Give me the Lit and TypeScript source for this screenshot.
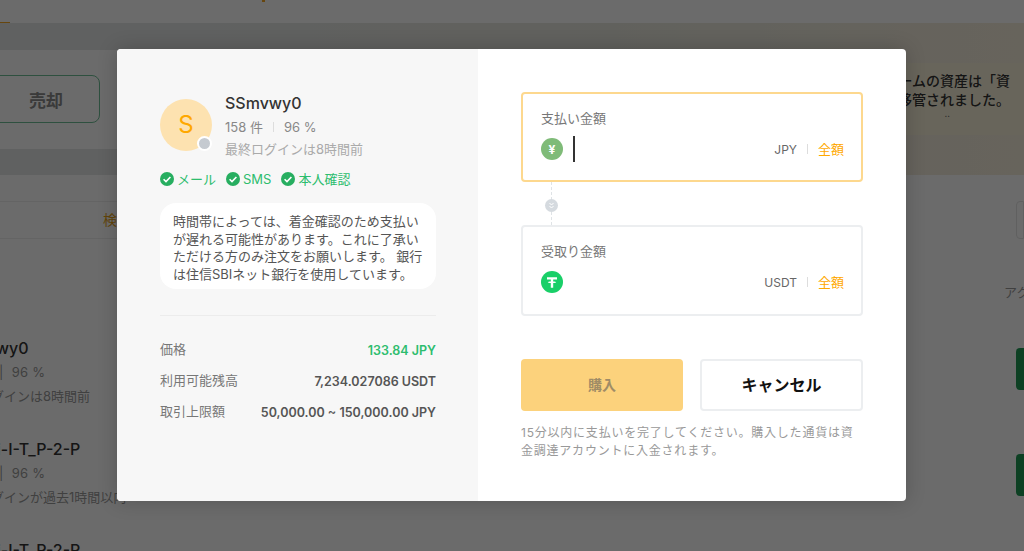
import { LitElement, html, css } from 'lit';
import { customElement } from 'lit/decorators.js';

const checkIcon = html`<svg class="check" viewBox="0 0 14 14" width="14" height="14">
  <circle cx="7" cy="7" r="7" fill="#27ae60"></circle>
  <path d="M3.6 7.2l2.4 2.4 4.4-4.6" fill="none" stroke="#fff" stroke-width="1.6"></path>
</svg>`;

const tetherIcon = html`<svg viewBox="0 0 22 22" width="22" height="22">
  <circle cx="11" cy="11" r="11" fill="#19cf68"></circle>
  <path d="M6 6.2h10v2.2h-3.8v2.1c1.6.1 3 .4 3 .8s-1.4.7-3 .8v4.6H9.8v-4.6c-1.6-.1-3-.4-3-.8s1.4-.7 3-.8V8.400H6z" fill="#fff"></path>
</svg>`;

const traders = [
  { name: 'SSmvwy0', login: '最終ログインは8時間前' },
  { name: 'HODLi-I-T_P-2-P', login: '最終ログインが過去1時間以内' },
  { name: 'HODLi-I-T_P-2-P', login: '最終ログインが過去1時間以内' },
];

@customElement('app-root')
export default class App extends LitElement {
  static override styles = css`
    :host {
      display: block;
      font-family: Inter, 'Noto Sans CJK JP', sans-serif;
      color: #333;
    }
    .page {
      position: relative;
      height: 551px;
      overflow: hidden;
      background: #fff;
    }

    /* page behind the dialog */
    .bg__top {
      height: 23px;
      display: flex;
      align-items: flex-end;
    }
    .bg__top > i {
      width: 10px;
      height: 1px;
      background: #f5a623;
    }
    .bg__top > b {
      align-self: flex-start;
      width: 3px;
      height: 2px;
      margin-left: 252px;
      background: #f5a623;
    }
    .bg__hero {
      display: grid;
      grid-template-columns: 1fr 480px;
      height: 152px;
      background: linear-gradient(90deg, #e4e6e6 20%, #e8e8de 60%, #f6eedc 100%);
    }
    .bg__hero-left {
      padding: 27px 0 26px;
    }
    .bg__panel {
      height: 99px;
      background: #fff;
      padding-top: 25px;
      box-sizing: border-box;
    }
    .bg__sell {
      width: 120px;
      height: 48px;
      margin-left: -20px;
      display: flex;
      align-items: center;
      justify-content: center;
      padding-left: 12px;
      border: 1px solid #6fbf97;
      border-radius: 8px;
      box-sizing: border-box;
      font-size: 17px;
      font-weight: 700;
      color: #8a8a8a;
    }
    .bg__hero-right {
      padding: 40px 0;
    }
    .bg__notice {
      height: 72px;
      box-sizing: border-box;
      padding: 8px 14px 0 0;
      background: #f8f1da;
      text-align: right;
      font-size: 14px;
      font-weight: 500;
      line-height: 19px;
      white-space: nowrap;
    }
    .bg__dots {
      font-size: 9px;
      line-height: 10px;
      padding-right: 60px;
      color: #555;
    }
    .bg__lower {
      display: grid;
      grid-template-columns: 1fr 120px;
    }
    .bg__tabs {
      margin-top: 26px;
      height: 38px;
      border: solid #eee;
      border-width: 1px 0;
      box-sizing: border-box;
      padding-left: 103px;
      font-size: 14px;
      line-height: 36px;
      color: #e8a317;
    }
    .bg__traders {
      display: flex;
      flex-direction: column;
      gap: 30px;
      margin: 98px 0 0 -48px;
    }
    .bg__trader-name {
      font-size: 16px;
      font-weight: 500;
      line-height: 22px;
      height: 22px;
    }
    .bg__trader-stats,
    .bg__trader-login {
      font-size: 13px;
      color: #999;
      line-height: 24px;
      white-space: nowrap;
    }
    .bg__trader-stats {
      margin-top: 1px;
      word-spacing: 0.6px;
    }
    .bg__side {
      padding-top: 26px;
    }
    .bg__filter {
      height: 38px;
      margin-left: 112px;
      border: 1px solid #e4e4e4;
      border-radius: 4px 0 0 4px;
      box-sizing: border-box;
    }
    .bg__side-label {
      margin: 44px 0 0 100px;
      font-size: 13px;
      line-height: 18px;
      color: #999;
      white-space: nowrap;
    }
    .bg__buy {
      height: 42px;
      margin: 47px 0 64px 112px;
      background: #1f9a55;
      border-radius: 4px 0 0 4px;
    }
    .bg__buy + .bg__buy {
      margin-top: 0;
    }

    /* dialog */
    .overlay {
      position: absolute;
      inset: 0;
      display: flex;
      align-items: center;
      justify-content: center;
      padding: 0 1px 1px 0;
      background: rgba(0, 0, 0, 0.58);
    }
    .modal {
      display: flex;
      width: 789px;
      height: 452px;
      background: #fff;
      border-radius: 4px;
      overflow: hidden;
      box-shadow: 0 0 20px rgba(0, 0, 0, 0.2);
    }
    .info {
      width: 361px;
      box-sizing: border-box;
      padding: 50px 42px 0 43px;
      background: #f7f7f7;
    }
    .user {
      display: flex;
      gap: 13px;
    }
    .avatar {
      position: relative;
      flex: none;
      width: 52px;
      height: 52px;
      border-radius: 50%;
      background: #fde2b0;
      color: #ffa800;
      font-size: 24px;
      line-height: 52px;
      text-align: center;
    }
    .avatar::after {
      content: '';
      position: absolute;
      right: 0;
      bottom: 0;
      width: 11px;
      height: 11px;
      border: 2px solid #fff;
      border-radius: 50%;
      background: #c5cad0;
    }
    .user__name {
      margin-top: -7px;
      font-size: 16px;
      font-weight: 500;
      line-height: 22px;
      color: #333;
    }
    .user__stats {
      display: flex;
      align-items: center;
      margin-top: 1px;
      font-size: 13px;
      line-height: 24px;
      color: #888;
    }
    .user__stats > i {
      width: 1px;
      height: 10px;
      margin: 0 10px;
      background: #ddd;
    }
    .user__login {
      font-size: 13px;
      line-height: 20px;
      color: #aaa;
    }
    .verified {
      display: flex;
      gap: 10px;
      margin-top: 10px;
      font-size: 13px;
      line-height: 20px;
      color: #2dbd6e;
    }
    .verified > span {
      display: flex;
      align-items: center;
      gap: 3px;
    }
    .note {
      margin-top: 14px;
      padding: 10px 13px 0;
      height: 86px;
      box-sizing: border-box;
      background: #fff;
      border-radius: 16px;
      font-size: 13px;
      line-height: 17.6px;
      color: #555;
    }
    .info hr {
      height: 1px;
      margin: 26px 0 25px;
      border: 0;
      background: #ececec;
    }
    .rows {
      display: grid;
      grid-template-columns: auto 1fr;
      row-gap: 12px;
      font-size: 13px;
      line-height: 18px;
      color: #777;
    }
    .rows > span {
      margin-top: -1px;
    }
    .rows > b {
      margin-top: 1px;
      text-align: right;
      font-size: 12.5px;
      font-weight: 600;
      color: #555;
    }
    .rows > b.price {
      color: #2dbd6e;
    }
    .trade {
      flex: 1;
      padding: 43px;
    }
    .field {
      display: flex;
      flex-direction: column;
      gap: 9px;
      height: 91px;
      box-sizing: border-box;
      padding: 15px 18px 0;
      border: 2px solid #eceef0;
      border-radius: 4px;
    }
    .field--active {
      height: 90px;
      border-color: #fdd88e;
    }
    .field__label {
      font-size: 13px;
      line-height: 18px;
      color: #777;
    }
    .field__row {
      display: flex;
      align-items: center;
      height: 26px;
      margin-right: -1px;
    }
    .coin {
      display: flex;
      align-items: center;
      justify-content: center;
      width: 22px;
      height: 22px;
      border-radius: 50%;
      background: #7fbb78;
      color: #fff;
      font-size: 12px;
      font-weight: 700;
    }
    .caret {
      width: 2px;
      height: 26px;
      margin-left: 10px;
      background: #333;
    }
    .unit {
      margin-left: auto;
      font-size: 12px;
      color: #666;
    }
    .sep {
      width: 1px;
      height: 10px;
      margin: 0 10px;
      background: #ddd;
    }
    .all {
      margin-top: -1px;
      font-size: 13px;
      color: #ffa800;
    }
    .link {
      position: relative;
      height: 43px;
      width: 61px;
      box-sizing: border-box;
      padding-top: 4px;
      display: flex;
      align-items: center;
      justify-content: center;
    }
    .link::before {
      content: '';
      position: absolute;
      top: 0;
      bottom: 0;
      left: 30px;
      border-left: 1px dashed #dfe3e6;
    }
    .link > span {
      position: relative;
      display: flex;
      width: 13px;
      height: 13px;
      border-radius: 50%;
      background: #d5dadf;
    }
    .link svg {
      margin: auto;
    }
    .actions {
      display: grid;
      grid-template-columns: 162px 163px;
      justify-content: space-between;
      margin-top: 43px;
    }
    .btn {
      height: 52px;
      display: flex;
      align-items: center;
      justify-content: center;
      box-sizing: border-box;
      padding-bottom: 2px;
      border-radius: 4px;
      font-size: 14px;
      font-weight: 700;
    }
    .btn--buy {
      background: #fcd27c;
      color: #a08c66;
    }
    .btn--cancel {
      border: 2px solid #eceef0;
      font-size: 16px;
      color: #111;
    }
    .hint {
      margin: 13px 0 0;
      font-size: 12px;
      line-height: 18px;
      letter-spacing: 0.78px;
      color: #999;
    }
  `;

  renderField(label: string, unit: string, coin: unknown, active = false) {
    return html`
      <div class="field ${active ? 'field--active' : ''}">
        <div class="field__label">${label}</div>
        <div class="field__row">
          ${coin}
          ${active ? html`<div class="caret"></div>` : ''}
          <span class="unit">${unit}</span>
          <span class="sep"></span>
          <span class="all">全額</span>
        </div>
      </div>
    `;
  }

  override render() {
    return html`
      <div class="page">
        <div class="bg__top"><i></i><b></b></div>
        <div class="bg__hero">
          <div class="bg__hero-left">
            <div class="bg__panel"><div class="bg__sell">売却</div></div>
          </div>
          <div class="bg__hero-right">
            <div class="bg__notice">
              <div>プラットフォームの資産は「資</div>
              <div>金調達アカウントに移管されました。</div>
              <div class="bg__dots">..</div>
            </div>
          </div>
        </div>
        <div class="bg__lower">
          <div>
            <div class="bg__tabs">検索</div>
            <div class="bg__traders">
              ${traders.map(
                (t) => html`
                  <div>
                    <div class="bg__trader-name">${t.name}</div>
                    <div class="bg__trader-stats">158 件 &nbsp;|&nbsp; 96 %</div>
                    <div class="bg__trader-login">${t.login}</div>
                  </div>
                `
              )}
            </div>
          </div>
          <div class="bg__side">
            <div class="bg__filter"></div>
            <div class="bg__side-label">アクション</div>
            <div class="bg__buy"></div>
            <div class="bg__buy"></div>
          </div>
        </div>

        <div class="overlay">
          <div class="modal">
            <div class="info">
              <div class="user">
                <div class="avatar">S</div>
                <div>
                  <div class="user__name">SSmvwy0</div>
                  <div class="user__stats">158 件<i></i>96 %</div>
                  <div class="user__login">最終ログインは8時間前</div>
                </div>
              </div>
              <div class="verified">
                <span>${checkIcon}メール</span>
                <span>${checkIcon}SMS</span>
                <span>${checkIcon}本人確認</span>
              </div>
              <div class="note">
                時間帯によっては、着金確認のため支払いが遅れる可能性があります。これに了承いただける方のみ注文をお願いします。 銀行は住信SBIネット銀行を使用しています。
              </div>
              <hr />
              <div class="rows">
                <span>価格</span><b class="price">133.84 JPY</b>
                <span>利用可能残高</span><b>7,234.027086 USDT</b>
                <span>取引上限額</span><b>50,000.00 ~ 150,000.00 JPY</b>
              </div>
            </div>
            <div class="trade">
              ${this.renderField('支払い金額', 'JPY', html`<span class="coin">¥</span>`, true)}
              <div class="link">
                <span>
                  <svg viewBox="0 0 7 7" width="7" height="7">
                    <path d="M1.500 1l2 2 2-2M1.500 4l2 2 2-2" fill="none" stroke="#fff" stroke-width="1"></path>
                  </svg>
                </span>
              </div>
              ${this.renderField('受取り金額', 'USDT', tetherIcon)}
              <div class="actions">
                <div class="btn btn--buy">購入</div>
                <div class="btn btn--cancel">キャンセル</div>
              </div>
              <p class="hint">15分以内に支払いを完了してください。購入した通貨は資金調達アカウントに入金されます。</p>
            </div>
          </div>
        </div>
      </div>
    `;
  }
}
